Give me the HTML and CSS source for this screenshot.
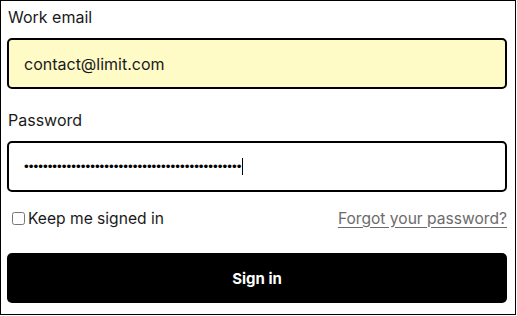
FILE: index.html
```html
<!DOCTYPE html>
<html>
<head>
<meta charset="utf-8">
<link rel="stylesheet" href="styles.css">
</head>
<body>
<form class="frame">
  <label class="label" for="email">Work email</label>
  <input class="field field-filled" id="email" type="email" value="contact@limit.com">
  <label class="label label-second" for="pw">Password</label>
  <div class="pw-wrap">
    <input class="field field-pw" id="pw" type="password" value="..............................................">
    <span class="caret"></span>
  </div>
  <div class="row">
    <label class="keep"><input class="check" type="checkbox">Keep me signed in</label>
    <a class="forgot" href="#">Forgot your password?</a>
  </div>
  <button class="submit" type="button">Sign in</button>
</form>
</body>
</html>
```

FILE: styles.css
```css
html, body {
  margin: 0;
  padding: 0;
  background: #fff;
}
body {
  font-family: "Inter", "Liberation Sans", Arial, sans-serif;
  color: #1a1a1a;
}
.frame {
  box-sizing: border-box;
  width: 516px;
  height: 315px;
  border: 1px solid #000;
  padding: 6px 8px 0 6px;
  display: flex;
  flex-direction: column;
  margin: 0;
}
.label {
  display: block;
  font-size: 16px;
  line-height: 20px;
  height: 20px;
  margin: 0 0 11px 1px;
  color: #1a1a1a;
}
.label-second {
  margin-top: 21px;
}
.field {
  box-sizing: border-box;
  width: 500px;
  height: 51px;
  margin: 0;
  border: 2px solid #000;
  border-radius: 5px;
  padding: 0 15px;
  font-family: inherit;
  font-size: 16px;
  color: #1a1a1a;
  background: #fff;
  outline: none;
}
.field-filled {
  background: #fffbc7;
}
.pw-wrap {
  position: relative;
  width: 500px;
}
.field-pw {
  font-family: "Liberation Sans", Arial, sans-serif;
  font-size: 13.5px;
  color: #000;
}
.caret {
  position: absolute;
  left: 235px;
  top: 17px;
  width: 1px;
  height: 17px;
  background: #000;
}
.row {
  display: flex;
  justify-content: space-between;
  align-items: center;
  margin-top: 15px;
  height: 22px;
  font-size: 15.6px;
}
.keep {
  display: flex;
  align-items: center;
  color: #1a1a1a;
}
.check {
  margin: 0 3px 0 5px;
  width: 13px;
  height: 13px;
}
.forgot {
  color: #6b6b6b;
  text-decoration: underline;
  text-underline-offset: 3px;
}
.submit {
  margin-top: 24px;
  box-sizing: border-box;
  width: 500px;
  height: 50px;
  border: 0;
  border-radius: 5px;
  background: #000;
  color: #fff;
  font-family: inherit;
  font-size: 15px;
  font-weight: 700;
}
```
